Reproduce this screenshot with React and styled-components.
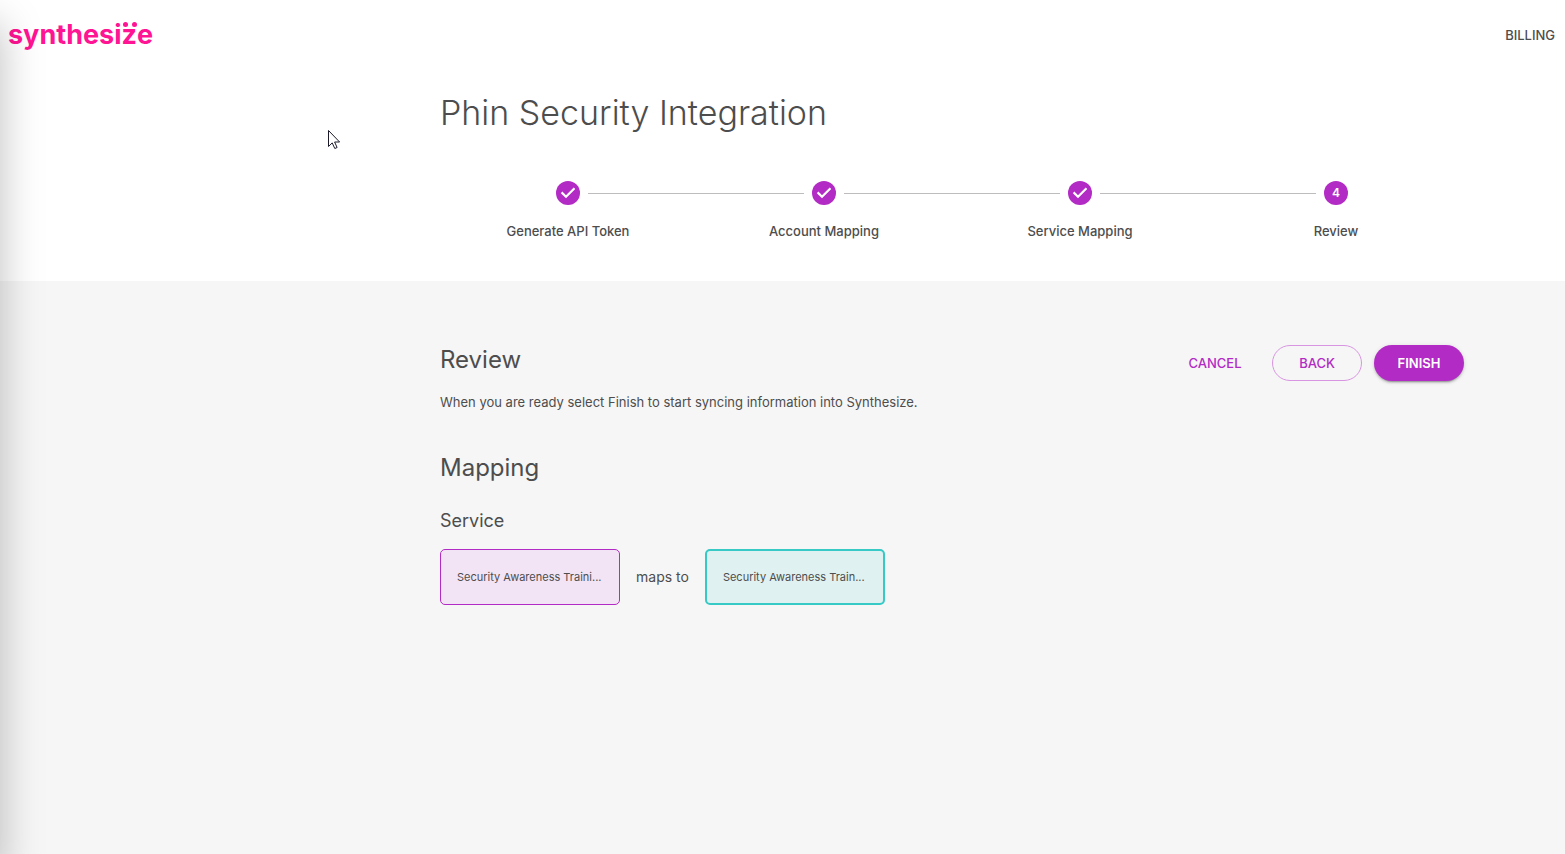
import React from "react"
import styled, { createGlobalStyle } from "styled-components"

const theme = {
  purple: "#b22bc5",
  pink: "#ff1493",
  teal: "#36c9c6",
  text: "#4d4d4d",
  grey: "#f6f6f6",
  font: `Inter, "Liberation Sans", sans-serif`,
}

const GlobalStyle = createGlobalStyle`
  * {
    box-sizing: border-box;
  }
  body {
    margin: 0;
    background-color: ${theme.grey};
    color: ${theme.text};
    font-family: ${theme.font};
    font-size: 13px;
    line-height: 20px;
  }
  h1, h2, h3, p, ol {
    margin: 0;
    padding: 0;
    font-weight: 400;
  }
`

/* closed side drawer, only its shadow reaches the page */
const Drawer = styled.div`
  position: fixed;
  top: 0;
  bottom: 0;
  left: -240px;
  width: 240px;
  pointer-events: none;
  box-shadow: 0 24px 40px 0 rgba(0, 0, 0, 0.26);
`

const TopBar = styled.header`
  display: flex;
  align-items: center;
  justify-content: space-between;
  height: 70px;
  padding: 0 10px 0 8px;
  background-color: white;
`

const Logo = styled.a`
  color: ${theme.pink};
  font-size: 27px;
  font-weight: 700;
  line-height: 36px;
  text-decoration: none;
`

const DottedLetter = styled.span`
  position: relative;

  &::before,
  &::after {
    content: "";
    position: absolute;
    top: 4px;
    width: 5px;
    height: 5px;
    border-radius: 50%;
    background-color: ${theme.pink};
  }
  &::before {
    left: 2px;
  }
  &::after {
    right: 0;
  }
`

const NavLink = styled.a`
  color: ${theme.text};
  font-weight: 500;
  text-decoration: none;
`

const Band = styled.section`
  padding: ${({ $top }) => $top}px 0 40px 339px;
  background-color: ${({ $bg }) => $bg};
`

const Container = styled.div`
  max-width: 1024px;
  margin: 0 auto;
`

const Title = styled.h1`
  font-size: 34px;
  font-weight: 300;
  line-height: 44px;
`

const Stepper = styled.ol`
  display: flex;
  margin-top: 46px;
  list-style: none;
`

const Step = styled.li`
  flex: 1;
  text-align: center;
`

const StepTrack = styled.div`
  display: flex;
  align-items: center;
  gap: 8px;
  margin-bottom: 16px;
`

const StepLine = styled.span`
  flex: 1;
  height: 1px;
  background-color: ${({ $hidden }) => ($hidden ? "transparent" : "#bdbdbd")};
`

const StepIcon = styled.span`
  display: flex;
  align-items: center;
  justify-content: center;
  width: 24px;
  height: 24px;
  border-radius: 50%;
  background-color: ${theme.purple};
  color: white;
  font-size: 12px;
  font-weight: 600;
`

const StepLabel = styled.span`
  font-weight: 500;
`

const ReviewHeader = styled.div`
  display: flex;
  align-items: flex-start;
  justify-content: space-between;
`

const Heading = styled.h2`
  font-size: 24px;
  line-height: 30px;
`

const SubHeading = styled.h3`
  margin: 27px 0 17px;
  font-size: 18px;
  line-height: 22px;
`

const Text = styled.p`
  margin: 17px 0 41px;
`

const Actions = styled.div`
  display: flex;
  gap: 12px;
`

const Button = styled.button`
  min-width: 90px;
  height: 36px;
  padding: 0 16px;
  border: 1px solid transparent;
  border-radius: 18px;
  background-color: transparent;
  color: ${theme.purple};
  font-family: inherit;
  font-size: 13px;
  font-weight: 500;
  cursor: pointer;
`

const OutlinedButton = styled(Button)`
  border-color: #d895e2;
`

const FilledButton = styled(Button)`
  background-color: ${theme.purple};
  color: white;
  font-weight: 600;
  box-shadow: 0 3px 1px -2px rgba(0, 0, 0, 0.2),
    0 2px 2px 0 rgba(0, 0, 0, 0.14), 0 1px 5px 0 rgba(0, 0, 0, 0.12);
`

const MappingRow = styled.div`
  display: flex;
  align-items: center;
  gap: 16px;
`

const MapsTo = styled.span`
  font-size: 14px;
`

const ServiceCard = styled.div`
  display: flex;
  align-items: center;
  width: 180px;
  height: 56px;
  padding: 0 16px;
  border: ${({ $border }) => $border};
  border-radius: 5px;
  background-color: ${({ $bg }) => $bg};
  font-size: 11px;
  white-space: nowrap;
`

const Cursor = styled.svg`
  position: absolute;
  top: 129px;
  left: 327px;
`

const steps = ["Generate API Token", "Account Mapping", "Service Mapping", "Review"]

const CheckIcon = () => (
  <svg width="24" height="24" viewBox="0 0 24 24" aria-hidden="true">
    <path d="M5.6 11.4l4.4 4.3 8.5-8.5" fill="none" stroke="white" strokeWidth="2.2" />
  </svg>
)

const App = () => {
  const last = steps.length - 1
  return (
    <>
      <GlobalStyle />
      <TopBar>
        <Logo href="#">
          synthesi<DottedLetter>z</DottedLetter>e
        </Logo>
        <NavLink href="#billing">BILLING</NavLink>
      </TopBar>
      <main>
        <Band $top={21} $bg="white">
          <Container>
            <Title>Phin Security Integration</Title>
            <Stepper>
              {steps.map((label, i) => (
                <Step key={label}>
                  <StepTrack>
                    <StepLine $hidden={i === 0} />
                    <StepIcon>{i < last ? <CheckIcon /> : i + 1}</StepIcon>
                    <StepLine $hidden={i === last} />
                  </StepTrack>
                  <StepLabel>{label}</StepLabel>
                </Step>
              ))}
            </Stepper>
          </Container>
        </Band>
        <Band $top={64} $bg={theme.grey}>
          <Container>
            <ReviewHeader>
              <div>
                <Heading>Review</Heading>
                <Text>
                  When you are ready select Finish to start syncing information
                  into Synthesize.
                </Text>
              </div>
              <Actions>
                <Button type="button">CANCEL</Button>
                <OutlinedButton type="button">BACK</OutlinedButton>
                <FilledButton type="button">FINISH</FilledButton>
              </Actions>
            </ReviewHeader>
            <Heading>Mapping</Heading>
            <SubHeading>Service</SubHeading>
            <MappingRow>
              <ServiceCard $border={`1px solid ${theme.purple}`} $bg="#f3e4f5">
                Security Awareness Traini...
              </ServiceCard>
              <MapsTo>maps to</MapsTo>
              <ServiceCard $border={`2px solid ${theme.teal}`} $bg="#e0f1f1">
                Security Awareness Train...
              </ServiceCard>
            </MappingRow>
          </Container>
        </Band>
      </main>
      <Drawer />
      <Cursor width="14" height="22" viewBox="0 0 14 22" aria-hidden="true">
        <path
          d="M1.5 1.5v16l3.7-3.6 2.6 5.6 2.3-1-2.5-5.5h5z"
          fill="white"
          stroke="#1a1a2a"
        />
      </Cursor>
    </>
  )
}

export default App
